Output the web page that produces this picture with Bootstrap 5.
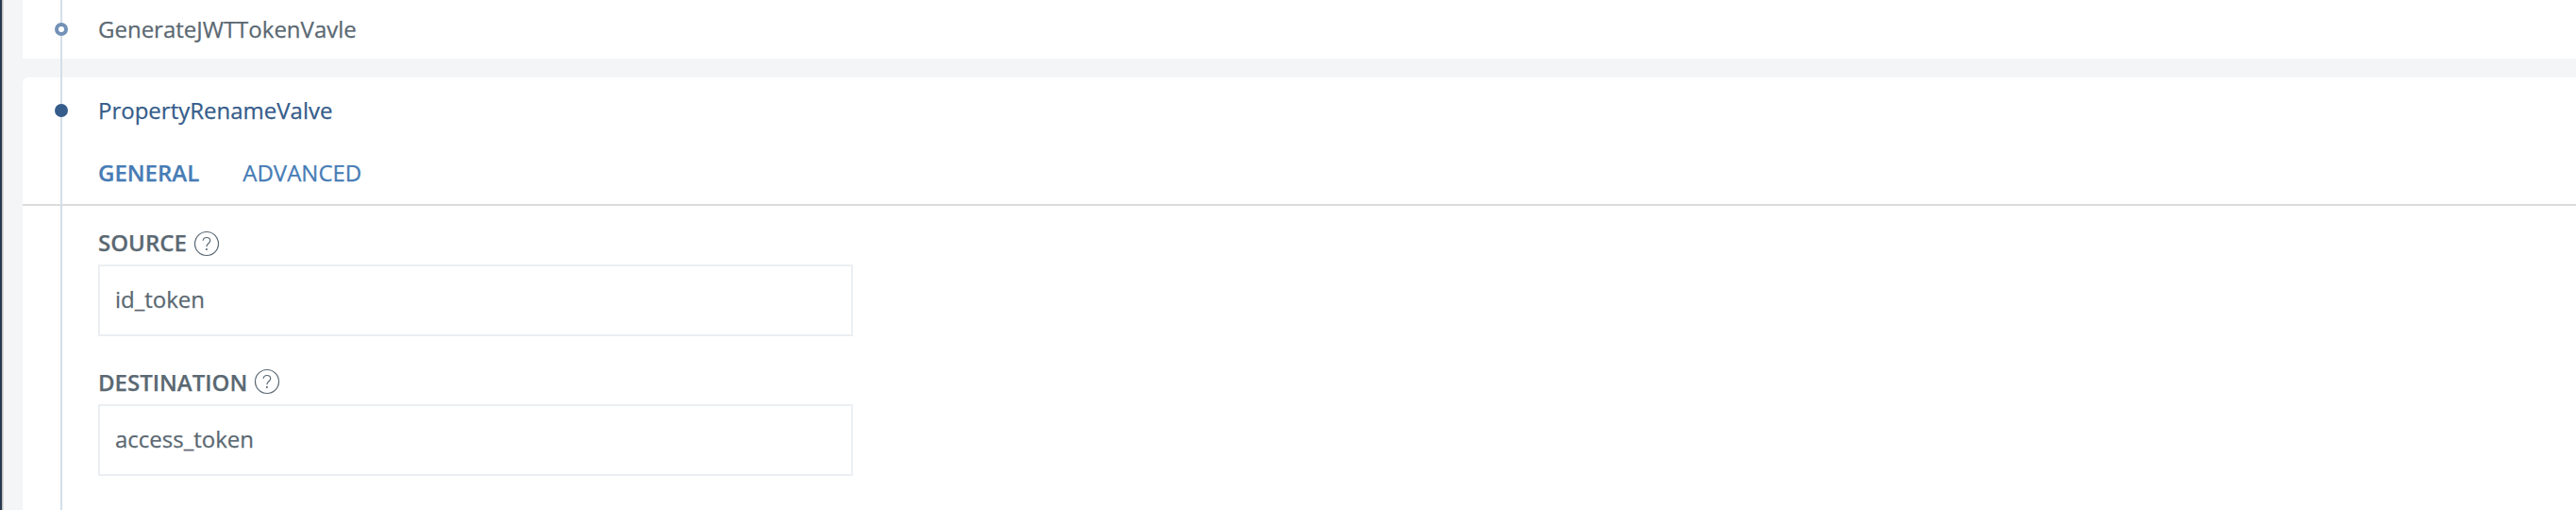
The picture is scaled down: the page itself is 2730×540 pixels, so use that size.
<!DOCTYPE html>
<html lang="en">
<head>
<meta charset="utf-8">
<title>Valves</title>
<link href="https://cdn.jsdelivr.net/npm/bootstrap@5.3.0/dist/css/bootstrap.min.css" rel="stylesheet">
<style>
body{font-family:"Open Sans",sans-serif;font-size:24px;line-height:32px;color:#5a6872;background:#f4f5f7;height:540px;overflow:hidden;-webkit-text-stroke:.25px}
.edge{width:4px;background:linear-gradient(90deg,#28384f 0 2px,#b9bcbf 2px 3px,#dcdcdc 3px 4px)}
.flow-list{margin-left:20px;gap:20px}
.step{background:#fff;padding-left:80px}
.step-done{height:62px;padding-top:15px}
.step-open{padding-top:19px;border-top-left-radius:6px}
.rail{left:40px;top:0;bottom:0;width:2px;background:#d3dee7;z-index:1}
.step-title{z-index:2}
.dot{left:-46px;top:9px;width:14px;height:14px;border-radius:50%;background:#355c8a}
.dot-ring{background:#fff;border:4px solid #7391b7}
.step-name{color:#355c8a}
.tabs{margin:34px 0 0 -80px;padding-left:80px;height:51px;border-bottom:2px solid #dcdcdc;gap:46px}
.tabs .nav-link{padding:0;color:#467cb5}
.tabs .active{font-weight:600}
.field{width:800px;margin-top:33px}
.tabs + .field{margin-top:23px}
.field .form-label{font-weight:600;gap:7px;margin-bottom:7px}
.help{fill:none;stroke:#5a6872;stroke-width:1.2;margin-top:-2px}
.tabs + .field .help{margin-top:2px}
.field .form-control{height:76px;border:2px solid #ebeff3;border-radius:0;padding:0 16px 3px;font-size:24px;line-height:32px;color:#5a6872;background:#fff}
</style>
</head>
<body class="d-flex">
<div class="edge flex-shrink-0"></div>
<main class="flow-list d-flex flex-column flex-grow-1 position-relative">
  <section class="step step-done">
    <div class="step-title position-relative"><span class="dot dot-ring position-absolute"></span>GenerateJWTTokenVavle</div>
  </section>
  <section class="step step-open flex-grow-1">
    <div class="step-title step-name position-relative"><span class="dot position-absolute"></span>PropertyRenameValve</div>
    <nav class="tabs nav flex-nowrap">
      <a class="nav-link active" href="#">GENERAL</a>
      <a class="nav-link" href="#">ADVANCED</a>
    </nav>
    <div class="field">
      <label class="form-label d-flex align-items-center" for="src">SOURCE
        <svg class="help" width="28" height="28" viewBox="0 0 28 28"><circle cx="14" cy="14" r="12.5"/><path d="M10.2 10.8C10.3 8.7 11.8 7.5 14 7.5s3.7 1.3 3.7 3.3c0 3-3.8 3-3.8 6.4"/><path d="M13.9 19v2" stroke-width="1.6"/></svg></label>
      <input id="src" class="form-control" value="id_token">
    </div>
    <div class="field">
      <label class="form-label d-flex align-items-center" for="dst">DESTINATION
        <svg class="help" width="28" height="28" viewBox="0 0 28 28"><circle cx="14" cy="14" r="12.5"/><path d="M10.2 10.8C10.3 8.7 11.8 7.5 14 7.5s3.7 1.3 3.7 3.3c0 3-3.8 3-3.8 6.4"/><path d="M13.9 19v2" stroke-width="1.6"/></svg></label>
      <input id="dst" class="form-control" value="access_token">
    </div>
  </section>
  <div class="rail position-absolute"></div>
</main>
<script src="https://cdn.jsdelivr.net/npm/bootstrap@5.3.0/dist/js/bootstrap.bundle.min.js"></script>
</body>
</html>
